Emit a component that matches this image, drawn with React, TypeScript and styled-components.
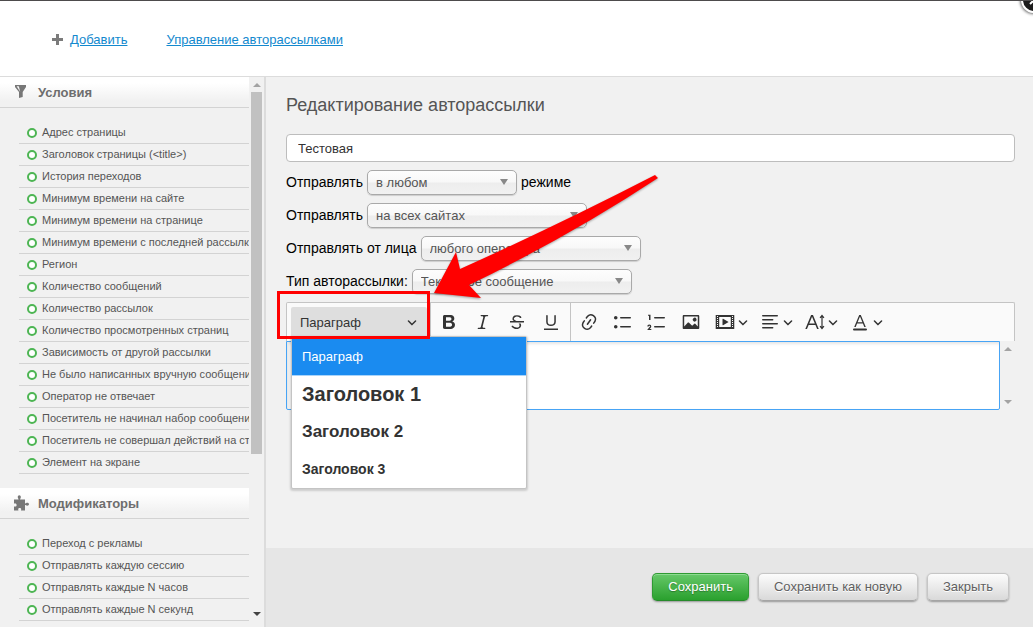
import React from "react";
import styled, { createGlobalStyle } from "styled-components";

const GlobalStyle = createGlobalStyle`
  *, *::before, *::after { box-sizing: border-box; }
  body { margin: 0; background: #f1f1f1; font-family: "Liberation Sans", Arial, sans-serif; font-size: 13px; color: #000; }
  h1, h2, ul { margin: 0; padding: 0; }
  button, input, select { font: inherit; margin: 0; }
`;

const Page = styled.div`
  position: relative;
  display: flex;
  flex-direction: column;
  height: 100vh;
  min-height: 600px;
  overflow: hidden;
  border-top: 1px solid #4d4b4c;
`;

const TopBar = styled.header`
  display: flex;
  align-items: center;
  gap: 39px;
  flex: none;
  height: 76px;
  padding: 2px 52px 0;
  background: #fff;
  border-bottom: 1px solid #dcdcdc;
`;

const TopLink = styled.a`
  display: inline-flex;
  align-items: center;
  gap: 7px;
  color: #1389ce;
  line-height: 16px;
  text-decoration: none;
  span { text-decoration: underline; }
`;

const CloseBadge = styled.button`
  position: absolute;
  top: -14px;
  right: -14px;
  width: 26px;
  height: 26px;
  padding: 0;
  border: 2px solid #fff;
  border-radius: 50%;
  background: #1c1c1c;
  color: #fff;
  box-shadow: 0 0 3px 1px rgba(0, 0, 0, 0.6);
  display: grid;
  place-items: center;
`;

const Body = styled.div`
  display: flex;
  flex: 1;
  min-height: 0;
`;

const Sidebar = styled.aside`
  display: flex;
  flex: none;
  width: 266px;
  padding-bottom: 5px;
  background: #f1f1f1;
  border-right: 2px solid #dcdcdc;
`;

const SidebarContent = styled.div`
  flex: 1;
  min-width: 0;
  overflow: hidden;
`;

const SectionTitle = styled.h2`
  display: flex;
  align-items: center;
  gap: 9px;
  height: 31px;
  padding-left: 12px;
  border-bottom: 1px solid #d3d3d3;
  background: linear-gradient(#fff 20%, #f1f1f1 80%);
  color: #6e6e6e;
  font-size: 13px;
  font-weight: bold;
`;

const List = styled.ul`
  list-style: none;
  padding: 14px 0 14px 19px;
`;

const Item = styled.li`
  display: flex;
  align-items: center;
  gap: 5px;
  height: 22px;
  padding: 0 0 2px 8px;
  border-bottom: 1px solid #d3d3d3;
  color: #555;
  font-size: 11px;
  white-space: nowrap;
  overflow: hidden;
  &::before {
    content: "";
    flex: none;
    width: 10px;
    height: 10px;
    margin-top: 2px;
    border: 2px solid #4db553;
    border-radius: 50%;
    background: #fff;
  }
`;

const ScrollTrack = styled.div`
  display: flex;
  flex-direction: column;
  align-items: center;
  justify-content: space-between;
  width: 15px;
  padding: 6px 0;
  background: #f1f1f1;
`;

const ScrollThumb = styled.div`
  flex: none;
  width: 11px;
  height: 68%;
  margin: 5px 0 auto;
  background: #c1c1c1;
`;

const ScrollArrow = styled.i<{ $down?: boolean; $color?: string }>`
  width: 0;
  height: 0;
  border: 4px solid transparent;
  ${(p) => (p.$down ? "border-top" : "border-bottom")}-color: ${(p) => p.$color ?? "#a3a3a3"};
  ${(p) => (p.$down ? "border-bottom" : "border-top")}-width: 0;
`;

const Main = styled.main`
  display: flex;
  flex-direction: column;
  flex: 1;
  min-width: 0;
`;

const Form = styled.form`
  flex: 1;
  display: flex;
  flex-direction: column;
  gap: 7px;
  padding: 17px 18px 0 20px;
`;

const Title = styled.h1`
  margin-bottom: 11px;
  color: #555;
  font-size: 18px;
  font-weight: normal;
  line-height: 22px;
`;

const NameInput = styled.input`
  width: 100%;
  height: 28px;
  padding: 0 11px;
  border: 1px solid #bdbdbd;
  border-radius: 4px;
  background: #fff;
  color: #333;
`;

const Row = styled.div`
  display: flex;
  align-items: center;
  gap: 4px;
  height: 26px;
  font-size: 14px;
`;

const SelectBox = styled.span<{ $width: number }>`
  display: grid;
  align-items: center;
  width: ${(p) => p.$width}px;
  select, svg { grid-area: 1 / 1; }
  svg { justify-self: end; margin-right: 9px; pointer-events: none; }
`;

const Select = styled.select`
  appearance: none;
  width: 100%;
  height: 25px;
  padding: 0 8px;
  border: 1px solid #a9a9a9;
  border-radius: 5px;
  background: linear-gradient(#fdfdfd, #f8f8f8 48%, #ededed 52%, #f1f1f1);
  box-shadow: 0 1px 1px rgba(0, 0, 0, 0.15);
  color: #555;
  font-size: 13px;
`;

const Editor = styled.div`
  position: relative;
  margin-top: 1px;
`;

const Toolbar = styled.div`
  display: flex;
  align-items: center;
  gap: 2px;
  height: 39px;
  padding-left: 4px;
  border: 1px solid #c4c4c4;
  border-bottom: 0;
  border-radius: 2px 2px 0 0;
  background: #fafafa;
  color: #333;
`;

const HeadingButton = styled.button`
  display: flex;
  align-items: center;
  justify-content: space-between;
  width: 136px;
  height: 30px;
  padding: 0 10px 0 9px;
  border: 0;
  border-radius: 2px 2px 0 0;
  background: #dedede;
  color: #333;
`;

const Separator = styled.span`
  align-self: stretch;
  width: 1px;
  margin-left: 1px;
  background: #c4c4c4;
`;

const ToolButton = styled.button<{ $menu?: boolean }>`
  display: flex;
  align-items: center;
  gap: 3px;
  width: ${(p) => (p.$menu ? 43 : 32)}px;
  height: 32px;
  padding: 0 6px;
  border: 0;
  background: none;
  color: #333;
  svg { flex: none; }
`;

const EditArea = styled.div`
  display: flex;
  height: 69px;
`;

const Editable = styled.div`
  flex: 1;
  border: 1px solid #47a4f5;
  border-radius: 0 0 2px 2px;
  background: #fff;
  box-shadow: inset 2px 2px 3px rgba(0, 0, 0, 0.1);
  outline: 0;
`;

const HeadingMenu = styled.div`
  position: absolute;
  top: 34px;
  left: 5px;
  z-index: 1;
  width: 236px;
  padding-bottom: 1px;
  border: 1px solid #c4c4c4;
  border-radius: 0 2px 2px 2px;
  background: #fff;
  box-shadow: 0 1px 2px 1px rgba(0, 0, 0, 0.15);
`;

const HeadingOption = styled.button<{ $size: number; $active?: boolean }>`
  display: flex;
  align-items: center;
  width: 100%;
  height: ${(p) => (p.$active ? 39 : 37)}px;
  padding: 0 10px;
  border: 0;
  border-bottom: ${(p) => (p.$active ? "1px solid #a9d4fa" : "0")};
  text-align: left;
  background: ${(p) => (p.$active ? "#1a8bf0" : "#fff")};
  color: ${(p) => (p.$active ? "#fff" : "#333")};
  font-size: ${(p) => p.$size}px;
  font-weight: ${(p) => (p.$active ? "normal" : "bold")};
`;

const Highlight = styled.div`
  position: absolute;
  top: -11px;
  left: -9px;
  z-index: 2;
  width: 153px;
  height: 48px;
  border: 3px solid #f00;
  pointer-events: none;
`;

const Pointer = styled.svg`
  position: absolute;
  top: -132px;
  left: 144px;
  z-index: 2;
  pointer-events: none;
  filter: drop-shadow(0 1px 1px rgba(0, 0, 0, 0.35));
`;

const Footer = styled.footer`
  display: flex;
  justify-content: flex-end;
  align-items: center;
  gap: 9px;
  flex: none;
  height: 79px;
  padding: 0 24px 2px;
  background: #e6e6e6;
`;

const ActionButton = styled.button<{ $primary?: boolean }>`
  height: 28px;
  padding: 0 15px;
  border: 1px solid ${(p) => (p.$primary ? "#2f9a33" : "#c6c6c6")};
  border-bottom-color: ${(p) => (p.$primary ? "#278a2b" : "#a5a5a5")};
  border-radius: 5px;
  background: ${(p) => (p.$primary ? "linear-gradient(#66c869, #2aa02e)" : "linear-gradient(#fcfcfc, #d9d9d9)")};
  box-shadow: 0 1px 2px rgba(0, 0, 0, 0.35)${(p) => (p.$primary ? ", inset 0 1px 0 #8ddb90" : "")};
  color: ${(p) => (p.$primary ? "#fff" : "#606060")};
  text-shadow: ${(p) => (p.$primary ? "0 1px 1px rgba(0, 0, 0, 0.3)" : "0 1px 0 #fff")};
`;

const CONDITIONS = [
  "Адрес страницы",
  "Заголовок страницы (<title>)",
  "История переходов",
  "Минимум времени на сайте",
  "Минимум времени на странице",
  "Минимум времени с последней рассылки",
  "Регион",
  "Количество сообщений",
  "Количество рассылок",
  "Количество просмотренных страниц",
  "Зависимость от другой рассылки",
  "Не было написанных вручную сообщений",
  "Оператор не отвечает",
  "Посетитель не начинал набор сообщения",
  "Посетитель не совершал действий на странице",
  "Элемент на экране",
];

const MODIFIERS = [
  "Переход с рекламы",
  "Отправлять каждую сессию",
  "Отправлять каждые N часов",
  "Отправлять каждые N секунд",
];

const ICONS = {
  bold: "M10.187 17H5.773c-.637 0-1.092-.138-1.364-.415-.273-.277-.409-.718-.409-1.323V4.738c0-.617.14-1.062.419-1.332.279-.27.73-.406 1.354-.406h4.68c.69 0 1.288.041 1.793.124.506.083.96.242 1.36.478.341.197.644.447.906.75a3.262 3.262 0 0 1 .808 2.162c0 1.401-.722 2.426-2.167 3.075C15.05 10.175 16 11.315 16 13.01a3.756 3.756 0 0 1-2.296 3.504 6.1 6.1 0 0 1-1.517.377c-.571.073-1.238.11-2 .11zm-.217-6.217H7v4.087h3.069c1.977 0 2.965-.69 2.965-2.072 0-.707-.256-1.22-.768-1.537-.512-.319-1.277-.478-2.296-.478zM7 5.13v3.619h2.606c.729 0 1.292-.067 1.69-.2a1.6 1.6 0 0 0 .91-.765c.165-.267.247-.566.247-.897 0-.707-.26-1.176-.778-1.409-.519-.232-1.31-.348-2.375-.348H7z",
  italic: "M9.586 14.633l.021.004c-.036.335.095.655.393.962.082.083.173.15.274.201h1.474a.6.6 0 1 1 0 1.2H5.304a.6.6 0 0 1 0-1.2h1.15c.474-.07.809-.182 1.005-.334.157-.122.291-.32.404-.597l2.416-9.55a1.053 1.053 0 0 0-.281-.823 1.12 1.12 0 0 0-.442-.296H8.15a.6.6 0 0 1 0-1.2h6.443a.6.6 0 1 1 0 1.2h-1.195c-.376.056-.65.155-.823.296-.215.175-.423.439-.623.79l-2.366 9.347z",
  strike: "M7 16.4c-.8-.4-1.5-.9-2.2-1.5a.6.6 0 0 1-.2-.5l.3-.6h1c1 1.2 2.1 1.7 3.7 1.7 1 0 1.8-.3 2.3-.6.6-.4.6-1.2.6-1.3.2-1.2-.9-2.1-.9-2.1h2.1c.3.7.4 1.2.4 1.7v.8l-.6 1.2c-.6.8-1.1 1-1.6 1.2a6 6 0 0 1-2.4.6c-1 0-1.8-.3-2.5-.6zM6.8 9L6 8.3c-.4-.5-.5-.8-.5-1.6 0-.7.1-1.3.5-1.8.4-.6 1-1 1.6-1.3a6.3 6.3 0 0 1 4.7 0 4 4 0 0 1 1.7 1l.3.7c0 .1.2.4-.2.7-.4.2-.9.1-1 0a3 3 0 0 0-1.2-1c-.4-.2-1-.3-2-.4-.7 0-1.4.2-2 .6-.8.6-1 .8-1 1.5 0 .8.5 1 1.2 1.5.6.4 1.1.7 1.9 1H6.8zM3 10.5V9h14v1.5z",
  underline: "M3 18v-1.5h14V18zM5.2 10V3.6c0-.4.4-.6.8-.6.3 0 .7.2.7.6v6.2c0 2 1.3 2.8 3.2 2.8 1.9 0 3.4-.9 3.4-2.9V3.6c0-.3.4-.5.8-.5.3 0 .7.2.7.5V10c0 2.7-2.2 4-4.9 4-2.6 0-4.7-1.2-4.7-4z",
  link: "M11.077 15l.991-1.416a.75.75 0 1 1 1.229.86l-1.148 1.64a.748.748 0 0 1-.217.206 5.251 5.251 0 0 1-8.503-5.955.741.741 0 0 1 .12-.274l1.147-1.639a.75.75 0 1 1 1.228.86L4.933 10.7l.006.003a3.75 3.75 0 0 0 6.132 4.294l.006.004zm5.494-5.335a.748.748 0 0 1-.12.274l-1.147 1.639a.75.75 0 1 1-1.228-.86l.86-1.23a3.75 3.75 0 0 0-6.144-4.301l-.86 1.229a.75.75 0 0 1-1.229-.86l1.148-1.64a.748.748 0 0 1 .217-.206 5.251 5.251 0 0 1 8.503 5.955zm-4.563-2.532a.75.75 0 0 1 .184 1.045l-3.155 4.505a.75.75 0 1 1-1.229-.86l3.155-4.506a.75.75 0 0 1 1.045-.184z",
  bullets: "M7 5.75c0 .414.336.75.75.75h9.5a.75.75 0 1 0 0-1.5h-9.5a.75.75 0 0 0-.75.75zm-6 0C1 4.784 1.777 4 2.75 4c.966 0 1.75.777 1.75 1.75 0 .966-.777 1.75-1.75 1.75C1.784 7.5 1 6.723 1 5.75zm6 9c0 .414.336.75.75.75h9.5a.75.75 0 1 0 0-1.5h-9.5a.75.75 0 0 0-.75.75zm-6 0c0-.966.777-1.75 1.75-1.75.966 0 1.75.777 1.75 1.75 0 .966-.777 1.75-1.75 1.75-.966 0-1.75-.777-1.75-1.75z",
  numbers: "M7 5.75c0 .414.336.75.75.75h9.5a.75.75 0 1 0 0-1.5h-9.5a.75.75 0 0 0-.75.75zM3.5 3v5H2V3.7H1v-1h2.5V3zM.343 17.857l2.59-3.257H2.92a.6.6 0 1 0-1.04 0H.302a2 2 0 1 1 3.995 0h-.001c-.048.405-.16.734-.333.988-.175.254-.59.692-1.244 1.312H4.3v1h-4l.043-.043zM7 14.75a.75.75 0 0 1 .75-.75h9.5a.75.75 0 1 1 0 1.5h-9.5a.75.75 0 0 1-.75-.75z",
  image: "M6.91 10.54c.26-.23.64-.21.88.03l3.36 3.14 2.23-2.06a.64.64 0 0 1 .87 0l2.52 2.97V4.5H3.2v10.12l3.71-4.08zm10.27-7.51c.6 0 1.09.47 1.09 1.05v11.84c0 .59-.49 1.06-1.09 1.06H2.79c-.6 0-1.09-.47-1.09-1.06V4.08c0-.58.49-1.05 1.1-1.05h14.38zm-5.22 5.56a1.96 1.96 0 1 1 3.4-1.96 1.96 1.96 0 0 1-3.4 1.96z",
  media: "M18.68 3.03c.6 0 .59-.03.59.55v12.84c0 .59.01.56-.59.56H1.29c-.6 0-.59.03-.59-.56V3.58c0-.58-.01-.55.6-.55h17.38zM15.77 15.03V5H4.2v10.03h11.57zM2 4v1h1V4H2zm0 2v1h1V6H2zm0 2v1h1V8H2zm0 2v1h1v-1H2zm0 2v1h1v-1H2zm0 2v1h1v-1H2zM17 4v1h1V4h-1zm0 2v1h1V6h-1zm0 2v1h1V8h-1zm0 2v1h1v-1h-1zm0 2v1h1v-1h-1zm0 2v1h1v-1h-1zM7.5 7.177a.4.4 0 0 1 .593-.351l5.133 2.824a.4.4 0 0 1 0 .7l-5.133 2.824a.4.4 0 0 1-.593-.35V7.176z",
  align: "M2 3.75c0 .414.336.75.75.75h14.5a.75.75 0 1 0 0-1.5H2.75a.75.75 0 0 0-.75.75zm0 8c0 .414.336.75.75.75h14.5a.75.75 0 1 0 0-1.5H2.75a.75.75 0 0 0-.75.75zm0 4c0 .414.336.75.75.75h9.929a.75.75 0 1 0 0-1.5H2.75a.75.75 0 0 0-.75.75zm0-8c0 .414.336.75.75.75h9.929a.75.75 0 1 0 0-1.5H2.75a.75.75 0 0 0-.75.75z",
  fontSize: "M9.816 11.5L7.038 4.785 4.261 11.5h5.555zm.62 1.5H3.641l-1.666 4.028H.312l5.789-14h1.875l5.789 14h-1.663L10.436 13zM17 2.6l2.4 2.9-.9.7-.9-1v9.6l.9-1 .9.7L17 17.4l-2.4-2.9.9-.7.9 1V5.2l-.9 1-.9-.7z",
  fontColor: "M12.4 10.3L10 4.5l-2.4 5.8h4.8zm.5 1.2H7.1L5.7 15H4.2l5-12h1.6l5 12h-1.5L12.9 11.5zm3.1 7H4a1 1 0 0 1 0-2h12a1 1 0 0 1 0 2z",
};

type IconName = keyof typeof ICONS;

const Icon = ({ name }: { name: IconName }) => (
  <svg width="20" height="20" viewBox="0 0 20 20" fill="currentColor" aria-hidden="true">
    <path fillRule={name === "media" ? "evenodd" : "nonzero"} d={ICONS[name]} />
  </svg>
);

const Chevron = () => (
  <svg width="10" height="10" viewBox="0 0 10 10" fill="currentColor" aria-hidden="true">
    <path d="M.941 4.523a.75.75 0 1 1 1.06-1.06l3.006 3.005 3.005-3.005a.75.75 0 1 1 1.06 1.06l-3.549 3.55a.75.75 0 0 1-1.168-.136L.941 4.523z" />
  </svg>
);

const FilterIcon = () => (
  <svg width="17" height="16" viewBox="0 0 17 16" aria-hidden="true">
    <path d="M3 1h11v2L10.7 8v5L7 14V8L3 3z" fill="#777" />
    <path d="M4.600 2.300h2.200l1.400 5.500z" fill="#f4f4f4" />
  </svg>
);

const PuzzleIcon = () => (
  <svg width="17" height="16" viewBox="0 0 17 16" aria-hidden="true">
    <path
      d="M2 4.500h4.200c.5 0 .4-.6 0-1.100C5.300 2 5.900.3 7.300.300s2 1.700 1.100 3.100c-.4.500-.5 1.100 0 1.100H13v3.600c0 .5.500.5.900.2 1.200-.9 3.100-.4 3.100 1s-1.900 1.900-3.100 1c-.4-.3-.9-.3-.9.2V15.500H9.400c-.5 0-.5-.4-.3-.8.4-1.100-.4-1.700-1.400-1.700s-1.800.6-1.400 1.700c.2.400.2.800-.3.800H2V11.800c0-.5.400-.5.800-.3 1.100.4 1.800-.4 1.800-1.500s-.7-1.900-1.800-1.500c-.4.200-.8.200-.8-.3z"
      fill="#777"
    />
  </svg>
);

interface FieldProps {
  id: string;
  label: string;
  value: string;
  width: number;
  after?: string;
}

const Field = ({ id, label, value, width, after }: FieldProps) => (
  <Row>
    <label htmlFor={id}>{label}</label>
    <SelectBox $width={width}>
      <Select id={id}>
        <option>{value}</option>
      </Select>
      <svg width="8" height="6" viewBox="0 0 8 6" aria-hidden="true">
        <path d="M0 0h8L4 6z" fill="#888" />
      </svg>
    </SelectBox>
    {after && <span>{after}</span>}
  </Row>
);

const Tool = ({ name, label, menu }: { name: IconName; label: string; menu?: boolean }) => (
  <ToolButton type="button" aria-label={label} $menu={menu}>
    <Icon name={name} />
    {menu && <Chevron />}
  </ToolButton>
);

const Section = ({ icon, title, items }: { icon: React.ReactNode; title: string; items: string[] }) => (
  <section>
    <SectionTitle>
      {icon}
      {title}
    </SectionTitle>
    <List>
      {items.map((text) => (
        <Item key={text}>{text}</Item>
      ))}
    </List>
  </section>
);

export default function App() {
  return (
    <Page>
      <GlobalStyle />
      <TopBar>
        <TopLink href="#add">
          <svg width="11" height="11" viewBox="0 0 11 11" aria-hidden="true">
            <path d="M4 0h3v4h4v3H7v4H4V7H0V4h4z" fill="#7b7b7b" />
          </svg>
          <span>Добавить</span>
        </TopLink>
        <TopLink href="#manage">
          <span>Управление авторассылками</span>
        </TopLink>
      </TopBar>
      <CloseBadge type="button" aria-label="Закрыть окно">
        <svg width="12" height="12" viewBox="0 0 12 12" aria-hidden="true">
          <path d="M2 2l8 8M10 2l-8 8" stroke="currentColor" strokeWidth="2" />
        </svg>
      </CloseBadge>
      <Body>
        <Sidebar>
          <SidebarContent>
            <Section icon={<FilterIcon />} title="Условия" items={CONDITIONS} />
            <Section icon={<PuzzleIcon />} title="Модификаторы" items={MODIFIERS} />
          </SidebarContent>
          <ScrollTrack>
            <ScrollArrow />
            <ScrollThumb />
            <ScrollArrow $down $color="#444" />
          </ScrollTrack>
        </Sidebar>
        <Main>
          <Form>
            <Title>Редактирование авторассылки</Title>
            <NameInput aria-label="Название" defaultValue="Тестовая" />
            <Field id="mode" label="Отправлять" value="в любом" width={150} after="режиме" />
            <Field id="sites" label="Отправлять" value="на всех сайтах" width={220} />
            <Field id="operator" label="Отправлять от лица" value="любого оператора" width={220} />
            <Field id="type" label="Тип авторассылки:" value="Текстовое сообщение" width={220} />
            <Editor>
              <Toolbar>
                <HeadingButton type="button">
                  Параграф
                  <Chevron />
                </HeadingButton>
                <Separator />
                <Tool name="bold" label="Жирный" />
                <Tool name="italic" label="Курсив" />
                <Tool name="strike" label="Зачеркнутый" />
                <Tool name="underline" label="Подчеркнутый" />
                <Separator />
                <Tool name="link" label="Ссылка" />
                <Tool name="bullets" label="Маркированный список" />
                <Tool name="numbers" label="Нумерованный список" />
                <Tool name="image" label="Изображение" />
                <Tool name="media" label="Видео" menu />
                <Tool name="align" label="Выравнивание" menu />
                <Tool name="fontSize" label="Размер шрифта" menu />
                <Tool name="fontColor" label="Цвет шрифта" menu />
              </Toolbar>
              <EditArea>
                <Editable contentEditable suppressContentEditableWarning role="textbox" aria-label="Текст сообщения" />
                <ScrollTrack>
                  <ScrollArrow />
                  <ScrollArrow $down />
                </ScrollTrack>
              </EditArea>
              <HeadingMenu>
                <HeadingOption type="button" $size={13} $active>Параграф</HeadingOption>
                <HeadingOption type="button" $size={20}>Заголовок 1</HeadingOption>
                <HeadingOption type="button" $size={17}>Заголовок 2</HeadingOption>
                <HeadingOption type="button" $size={14}>Заголовок 3</HeadingOption>
              </HeadingMenu>
              <Highlight />
              <Pointer width="236" height="136" viewBox="0 0 236 136" aria-hidden="true">
                <path d="M4 123L26 82L30 99Q130 54 225 5L228 8Q140 66 39 115L51 128z" fill="#f00" />
              </Pointer>
            </Editor>
          </Form>
          <Footer>
            <ActionButton type="button" $primary>Сохранить</ActionButton>
            <ActionButton type="button">Сохранить как новую</ActionButton>
            <ActionButton type="button">Закрыть</ActionButton>
          </Footer>
        </Main>
      </Body>
    </Page>
  );
}
